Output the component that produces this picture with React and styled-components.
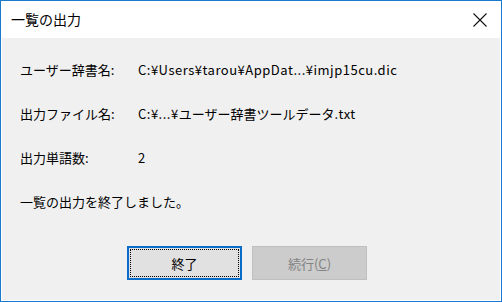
import styled, { createGlobalStyle } from 'styled-components';

const GlobalStyle = createGlobalStyle`
    html, body {
        margin: 0;
        padding: 0;
        background: #ffffff;
    }
    * {
        box-sizing: border-box;
    }
`;

const rows = [
    { label: 'ユーザー辞書名:', value: 'C:¥Users¥tarou¥AppDat...¥imjp15cu.dic' },
    { label: '出力ファイル名:', value: 'C:¥...¥ユーザー辞書ツールデータ.txt' },
    { label: '出力単語数:', value: '2' },
];

// latin runs are set a little wider, as the dialog font draws them
function splitLatin(text) {
    return text
        .split(/([\u0000-\u00ff]+)/)
        .filter(Boolean)
        .map((part, i) =>
            /^[\u0000-\u00ff]+$/.test(part) ? <Latin key={i}>{part}</Latin> : part
        );
}

export default function App() {
    return (
        <>
            <GlobalStyle />
            <Window>
                <TitleBar>
                    <Title>一覧の出力</Title>
                    <CloseButton>
                        <svg width="16" height="16" viewBox="0 0 16 16">
                            <path
                                d="M1.5 1.5 L14.5 14.5 M14.5 1.5 L1.5 14.5"
                                stroke="#111"
                                strokeWidth="1.1"
                                fill="none"
                            />
                        </svg>
                    </CloseButton>
                </TitleBar>
                <Body>
                    {rows.map((row, i) => (
                        <Row key={i}>
                            <Label>{row.label}</Label>
                            <Value>{splitLatin(row.value)}</Value>
                        </Row>
                    ))}
                    <Row>
                        <Label>一覧の出力を終了しました。</Label>
                    </Row>
                    <Buttons>
                        <Button $primary>
                            <span>終了</span>
                        </Button>
                        <Button disabled>
                            <span>
                                続行(<u>C</u>)
                            </span>
                        </Button>
                    </Buttons>
                </Body>
            </Window>
        </>
    );
}

const Window = styled.div`
    width: 502px;
    height: 302px;
    border: 1px solid #1979ca;
    display: flex;
    flex-direction: column;
    font-family: 'Noto Sans CJK JP', 'Noto Sans', sans-serif;
    color: #000;
`;

const TitleBar = styled.div`
    height: 37px;
    flex-shrink: 0;
    background: #ffffff;
    display: flex;
    align-items: center;
    justify-content: space-between;
    padding: 0 13px 0 10px;
`;

const Title = styled.span`
    font-size: 14px;
    margin-top: -2px;
`;

const CloseButton = styled.div`
    display: flex;
    align-items: center;
    margin-top: 1px;
`;

const Body = styled.div`
    flex: 1;
    background: #f0f0f0;
    border: 1px solid #ffffff;
    border-top: none;
    padding: 23px 0 0 18px;
    display: flex;
    flex-direction: column;
`;

const Row = styled.div`
    display: flex;
    height: 44px;
    font-size: 13px;
    line-height: 18px;
`;

const Label = styled.span`
    width: 118px;
    flex-shrink: 0;
    white-space: nowrap;
`;

const Value = styled.span`
    white-space: nowrap;
`;

const Latin = styled.span`
    letter-spacing: 0.5px;
`;

const Buttons = styled.div`
    display: flex;
    gap: 10px;
    padding-left: 107px;
    margin-top: 9px;
`;

const Button = styled.button`
    width: 115px;
    height: 34px;
    padding: 0;
    font-family: inherit;
    font-size: 13px;
    display: flex;
    align-items: center;
    justify-content: center;
    background: ${(p) => (p.$primary ? '#e1e1e1' : '#cccccc')};
    border: ${(p) => (p.$primary ? '2px solid #0a6cc8' : '1px solid #bfbfbf')};
    color: ${(p) => (p.$primary ? '#000' : '#838383')};
    position: relative;

    ${(p) =>
        p.$primary &&
        `
        &::after {
            content: '';
            position: absolute;
            inset: 1px;
            border: 1px dotted #000;
        }
    `}

    u {
        text-decoration-thickness: 1px;
    }
`;
